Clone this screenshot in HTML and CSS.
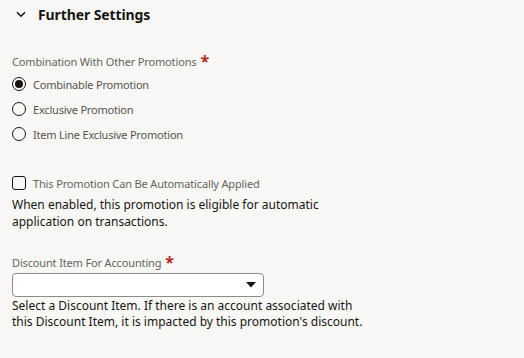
FILE: index.html
```html
<!DOCTYPE html>
<html>
<head>
<meta charset="utf-8">
<link rel="stylesheet" href="styles.css">
</head>
<body>
<div class="panel">
  <div class="header">
    <svg class="chev" width="10" height="7" viewBox="0 0 10 7"><path d="M1 1.2 L5 5.2 L9 1.2" fill="none" stroke="#161513" stroke-width="1.6"/></svg>
    <span class="title">Further Settings</span>
  </div>

  <div class="field">
    <div class="label">Combination With Other Promotions <span class="req">*</span></div>
    <div class="radios">
      <div class="radio checked"><span class="circle"></span><span class="rtext">Combinable Promotion</span></div>
      <div class="radio"><span class="circle"></span><span class="rtext">Exclusive Promotion</span></div>
      <div class="radio"><span class="circle"></span><span class="rtext">Item Line Exclusive Promotion</span></div>
    </div>
  </div>

  <div class="field check-field">
    <div class="check"><span class="box"></span><span class="ctext">This Promotion Can Be Automatically Applied</span></div>
    <p class="help">When enabled, this promotion is eligible for automatic<br>application on transactions.</p>
  </div>

  <div class="field select-field">
    <div class="label">Discount Item For Accounting <span class="req">*</span></div>
    <div class="select"><svg class="caret" width="10" height="6" viewBox="0 0 10 6"><path d="M0 0 H10 L5 5.5 Z" fill="#161513"/></svg></div>
    <p class="help">Select a Discount Item. If there is an account associated with<br>this Discount Item, it is impacted by this promotion's discount.</p>
  </div>
</div>
</body>
</html>
```
FILE: styles.css
```css
html, body {
  margin: 0;
  padding: 0;
  background: #f9f8f6;
}
body {
  font-family: "Noto Sans", "Open Sans", sans-serif;
  color: #161513;
  width: 524px;
  height: 358px;
  overflow: hidden;
}
.panel {
  padding: 4px 12px 0 12px;
}
.header {
  display: flex;
  align-items: center;
  height: 20px;
}
.chev {
  margin-left: 4px;
  margin-right: 12px;
}
.title {
  font-size: 14px;
  font-weight: 700;
  letter-spacing: -0.1px;
}
.field { margin-top: 30px; }
.label {
  font-size: 11px;
  color: #65625e;
  line-height: 16px;
  letter-spacing: -0.15px;
  display: flex;
  align-items: flex-start;
}
.req {
  color: #b3261e;
  font-size: 16px;
  line-height: 14px;
  margin-left: 4px;
  font-weight: 700;
}
.radios { margin-top: 6px; display: flex; flex-direction: column; gap: 9px; }
.radio { display: flex; align-items: center; height: 16px; }
.circle {
  box-sizing: border-box;
  width: 14px; height: 14px;
  border: 1.5px solid #161513;
  border-radius: 50%;
  margin-right: 7px;
  display: flex; align-items: center; justify-content: center;
}
.radio.checked .circle::after {
  content: "";
  width: 8px; height: 8px;
  border-radius: 50%;
  background: #161513;
}
.rtext { font-size: 11px; color: #55524e; letter-spacing: -0.2px; }
.check-field { margin-top: 33px; }
.check { display: flex; align-items: center; height: 16px; }
.box {
  box-sizing: border-box;
  width: 14px; height: 14px;
  border: 1.5px solid #161513;
  border-radius: 3px;
  margin-right: 7px;
}
.ctext { font-size: 11px; color: #65625e; letter-spacing: -0.15px; }
.help {
  margin: 5px 0 0 0;
  font-size: 12px;
  line-height: 17px;
  color: #161513;
}
.select-field { margin-top: 25px; }
.select {
  box-sizing: border-box;
  margin-top: 2px;
  width: 252px;
  height: 24px;
  border: 1px solid #8f8b86;
  border-radius: 4px;
  background: #fff;
  display: flex;
  align-items: center;
  justify-content: flex-end;
  padding-right: 7px;
}
.select + .help { margin-top: 1px; line-height: 16px; }
```
